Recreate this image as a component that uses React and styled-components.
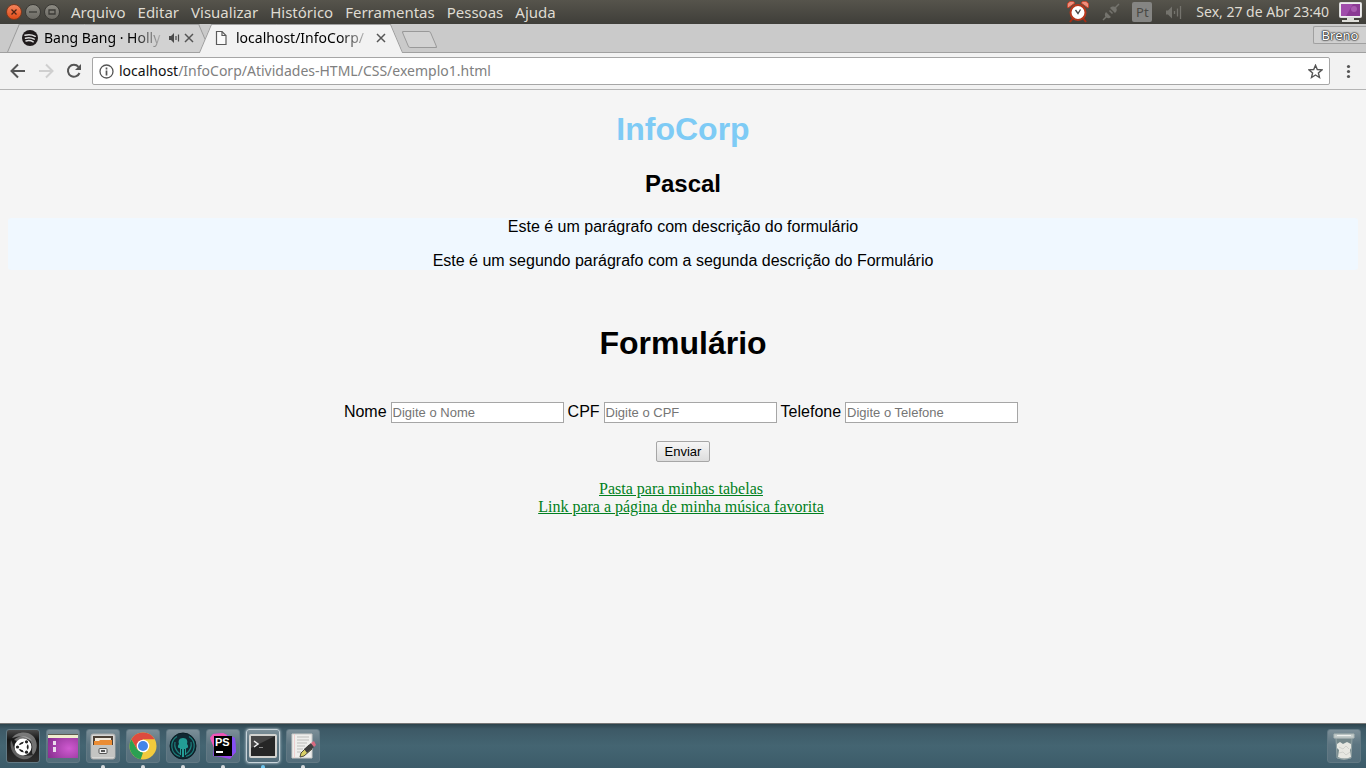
import React from "react";
import styled, { createGlobalStyle, css } from "styled-components";

const ui = '"Noto Sans", "Open Sans", sans-serif';
const page = '"Liberation Sans", Arial, sans-serif';
const pageSerif = '"Liberation Serif", "Times New Roman", serif';

const GlobalStyle = createGlobalStyle`
  * { box-sizing: border-box; }
  body { margin: 0; background: #f5f5f5; }
  svg { display: block; flex: none; }
`;

const Desktop = styled.div`
  display: flex;
  flex-direction: column;
  min-height: 100vh;
`;

/* System bar */
const SystemBar = styled.header`
  display: flex;
  align-items: center;
  height: 24px;
  padding: 0 4px 0 6px;
  background: linear-gradient(#56544c, #3f3e39);
  color: #dfdbd2;
  font: 14px/24px ${ui};
  white-space: nowrap;
`;
const WindowButtons = styled.div`
  display: flex;
  gap: 3px;
  margin-right: 11px;
`;
const WindowButton = styled.button`
  display: grid;
  place-items: center;
  width: 16px;
  height: 16px;
  padding: 0;
  border: 1px solid ${(p) => (p.$close ? "#7c3a1f" : "#3a3935")};
  border-radius: 50%;
  background: ${(p) =>
    p.$close
      ? "linear-gradient(#f4845c, #df4b17)"
      : "linear-gradient(#8d8b83, #6b6963)"};
`;
const Menu = styled.nav`
  display: flex;
  flex: 1;
  gap: 12px;
  font-size: 15px;
  line-height: 22px;
`;
const MenuItem = styled.button`
  padding: 0;
  border: 0;
  background: none;
  color: inherit;
  font: inherit;
`;
const Indicators = styled.div`
  display: flex;
  align-items: center;
`;
const Indicator = styled.span`
  margin-right: ${(p) => p.$gap}px;
`;
const Keyboard = styled(Indicator)`
  width: 20px;
  height: 20px;
  border-radius: 2px;
  background: #858583;
  color: #4a4945;
  font-size: 13px;
  line-height: 20px;
  text-align: center;
`;

/* Tab strip */
const TabStrip = styled.div`
  display: flex;
  height: 29px;
  padding-left: 13px;
  border-bottom: 1px solid #a0a0a0;
  background: #cacaca;
`;
const Tab = styled.div`
  position: relative;
  z-index: ${(p) => (p.$active ? 2 : 1)};
  display: flex;
  align-items: center;
  width: 192px;
  height: ${(p) => (p.$active ? 29 : 28)}px;
  padding: 0 11px ${(p) => (p.$active ? 1 : 0)}px 9px;
  color: #000;
  font: 14px/28px ${ui};
  &::before,
  &::after {
    content: "";
    position: absolute;
    z-index: -1;
    top: 0;
    bottom: 0;
    border-top: 1px solid #a0a0a0;
    background: ${(p) => (p.$active ? "#f2f2f2" : "#d2d2d2")};
  }
  &::before {
    left: 0;
    right: 40%;
    border-left: 1px solid #999;
    transform: skewX(-23deg);
  }
  &::after {
    left: 40%;
    right: 0;
    border-right: 1px solid #999;
    transform: skewX(23deg);
  }
`;
const TabTitle = styled.span`
  flex: 1;
  margin: 0 4px 0 6px;
  white-space: nowrap;
  mask-image: linear-gradient(to right, #000 calc(100% - 32px), transparent);
`;
const IconButton = styled.button`
  display: grid;
  place-items: center;
  padding: 0;
  border: 0;
  background: none;
`;
const TabAudio = styled.span`
  margin-right: 4px;
`;
const NewTab = styled.button`
  width: 29px;
  height: 17px;
  margin: 7px 0 0 8px;
  border: 1px solid #999;
  border-radius: 2px;
  background: #d2d2d2;
  transform: skewX(23deg);
`;
const Profile = styled.button`
  width: 53px;
  height: 18px;
  margin: 2px 0 0 auto;
  padding: 0;
  border: 1px solid #a0a0a0;
  border-right: 0;
  border-radius: 2px 0 0 2px;
  background: #d0d0d0;
  color: #fff;
  font: 13px/16px ${ui};
  text-shadow: 0 0 1px #222, 0 0 1px #222, 0 0 2px #222, 0 0 2px #444;
`;

/* Toolbar */
const Toolbar = styled.div`
  display: flex;
  align-items: center;
  height: 37px;
  padding: 0 9px 0 10px;
  border-bottom: 1px solid #b4b4b4;
  background: #f2f2f2;
`;
const Navigation = styled.div`
  display: flex;
  gap: 12px;
  margin-right: 10px;
`;
const AddressBox = styled.div`
  display: flex;
  flex: 1;
  align-items: center;
  height: 28px;
  margin-right: 9px;
  padding: 0 6px;
  border: 1px solid #a6a6a6;
  border-radius: 2px;
  background: #fff;
`;
const Address = styled.a`
  flex: 1;
  margin-left: 5px;
  color: #808080;
  font: 14px/26px ${ui};
  text-decoration: none;
`;
const Host = styled.span`
  color: #111;
`;

/* Document */
const Document = styled.main`
  flex: 1;
  padding: 21px 8px;
  background: #f5f5f5;
  color: #000;
  font: 16px/18px ${page};
  text-align: center;
`;
const Title = styled.h1`
  margin: 0 0 22px;
  color: ${(p) => p.$color || "#000"};
  font-size: 32px;
  line-height: 37px;
`;
const Subtitle = styled.h2`
  margin: 0 0 20px;
  font-size: 24px;
  line-height: 28px;
`;
const Description = styled.section`
  margin-bottom: 55px;
  border-radius: 3px;
  background: #f0f8ff;
`;
const Paragraph = styled.p`
  margin: 0;
  & + & {
    margin-top: 16px;
  }
`;
const Form = styled.form`
  display: flex;
  flex-direction: column;
  align-items: center;
  gap: 18px;
  margin: 40px 0 18px;
`;
const Fields = styled.div`
  display: flex;
  flex-wrap: wrap;
  justify-content: center;
  gap: 4px;
  padding-right: 4px;
`;
const Field = styled.label`
  display: flex;
  gap: 4px;
  line-height: 20px;
`;
const TextInput = styled.input`
  width: 173px;
  height: 21px;
  padding: 1px;
  border: 1px solid #a6a6a6;
  background: #fff;
  font: 13px/17px ${page};
  &::placeholder {
    color: #757575;
    opacity: 1;
  }
`;
const Submit = styled.button`
  width: 54px;
  height: 21px;
  padding: 0;
  border: 1px solid #a6a6a6;
  border-radius: 2px;
  background: linear-gradient(#f6f6f6, #dddddd);
  color: #000;
  font: 13px/18px ${page};
`;
const Links = styled.nav`
  display: flex;
  flex-direction: column;
  align-items: center;
  padding-right: 4px;
  font-family: ${pageSerif};
`;
const PageLink = styled.a`
  color: #008020;
`;

/* Dock */
const Dock = styled.footer`
  display: flex;
  gap: 6px;
  height: 45px;
  padding: 5px 5px 0 6px;
  border-top: 1px solid #777;
  background: linear-gradient(#2c434c, #3d5966 5px, #446572 22px, #3c5b69);
`;
const DockItem = styled.button`
  position: relative;
  display: grid;
  place-items: center;
  width: 34px;
  height: 34px;
  padding: 0;
  border: 1px solid ${(p) => (p.$focused ? "#c8d4da" : "#627984")};
  border-radius: 3px;
  background: ${(p) =>
    p.$dark
      ? "linear-gradient(#4a4a4a, #161616 30%, #2e2e2e)"
      : "linear-gradient(#7c8f98, #5d7581 45%, #546e7b)"};
  ${(p) => p.$focused && css`box-shadow: 0 0 3px #d7e3e8;`}
  ${(p) => p.$last && css`margin-left: auto;`}
  &::after {
    content: "";
    position: absolute;
    bottom: -6px;
    left: 14px;
    display: ${(p) => (p.$running ? "block" : "none")};
    width: 4px;
    height: 3px;
    border-radius: 2px 2px 0 0;
    background: ${(p) => (p.$focused ? "#6dc5ee" : "#d5d9db")};
  }
`;

const Svg = ({ w = 16, h = w, children }) => (
  <svg width={w} height={h} viewBox={`0 0 ${w} ${h}`} fill="none" aria-hidden="true">
    {children}
  </svg>
);

const AlarmIcon = () => (
  <Svg w={22}>
    <path d="M6 17 3 21M16 17l3 4" stroke="#a52c14" strokeWidth="2" />
    <path d="M1 7a4 4 0 0 1 7-5zM21 7a4 4 0 0 0-7-5z" fill="#ef8f7d" stroke="#c43e25" />
    <circle cx="11" cy="11.500" r="7.500" fill="#fff" stroke="#b7371c" strokeWidth="2" />
    <path d="m8.500 9 2.500 3.500 2.500-4" stroke="#444" strokeWidth="1.300" />
  </Svg>
);
const PlugIcon = () => (
  <Svg w={18}>
    <path d="m1 17 4-4M13 5l4-4M7.500 7.500 10.500 10.500" stroke="#74736d" strokeWidth="1.500" />
    <path d="M4 9 9 14c-2 1.800-4 1.300-5.200 0S2.300 11 4 9zM8 5l5 5c2-1.500 2.300-3.800 1-5.200S10 3 8 5z" fill="#74736d" />
  </Svg>
);
const VolumeIcon = () => (
  <Svg w={17}>
    <path d="M1 6.500h2l4-4v12l-4-4H1z" fill="#74736d" />
    <path d="M9.500 7v3M12.500 4.500v8M15.500 2v13" stroke="#74736d" strokeWidth="1.300" />
  </Svg>
);
const MonitorIcon = () => (
  <Svg w={23} h={22}>
    <path d="M8 16h7v3h5v2H3v-2h5z" fill="#deded9" />
    <rect x=".500" y="1.500" width="22" height="15" rx="1" fill="#eee" stroke="#ddd" />
    <rect x="2" y="3" width="19" height="12" fill="#8b3a94" />
    <path d="m2 3h12L7 15H2z" fill="#a04dab" />
    <circle cx="15" cy="8" r="3" fill="#c67ccc" opacity=".5" />
  </Svg>
);
const SpotifyIcon = () => (
  <Svg w={16}>
    <circle cx="8" cy="8" r="8" fill="#1f1a1b" />
    <path d="M3 5.300c3.500-1 7-.7 10.200 1M3.500 8.200c3-.8 6-.5 8.700 1M4 10.900c2.500-.6 5-.4 7.200.9" stroke="#ddd" strokeWidth="1.500" strokeLinecap="round" />
  </Svg>
);
const FileIcon = () => (
  <Svg w={16}>
    <path d="M2.500 1.500h5.500l4 4v9H2.500z" fill="#fafafa" stroke="#5a5a5a" strokeWidth="1.200" />
    <path d="M8 1.500v4h4" stroke="#5a5a5a" strokeWidth="1.200" />
  </Svg>
);
const SoundIcon = () => (
  <Svg w={11} h={10}>
    <path d="M0 3h2l3-3v10L2 7H0z" fill="#4b4b4b" />
    <path d="M7 3v4M9.500 1.500v7" stroke="#4b4b4b" strokeWidth="1.200" />
  </Svg>
);
const CloseIcon = () => (
  <Svg w={10}>
    <path d="m1 1 8 8M9 1 1 9" stroke="#555" strokeWidth="1.500" />
  </Svg>
);
const ArrowIcon = ({ forward }) => (
  <Svg w={16}>
    {forward ? (
      <path d="M1 8h13M8 1.500 14.500 8 8 14.500" stroke="#cfcfcf" strokeWidth="2" />
    ) : (
      <path d="M15 8H2M8 1.500 1.500 8 8 14.500" stroke="#555" strokeWidth="2" />
    )}
  </Svg>
);
const ReloadIcon = () => (
  <Svg w={16}>
    <path d="M13.500 10A6 6 0 1 1 12.500 3.800" stroke="#555" strokeWidth="2" />
    <path d="M15 1v6H9z" fill="#555" />
  </Svg>
);
const InfoIcon = () => (
  <Svg w={15}>
    <circle cx="7.500" cy="7.500" r="6.500" stroke="#555" strokeWidth="1.300" />
    <path d="M7.500 6.500v5M7.500 3.500v2" stroke="#555" strokeWidth="1.700" />
  </Svg>
);
const StarIcon = () => (
  <Svg w={15}>
    <path d="m7.500 1.300 1.800 4.200 4.700.4-3.600 3 1.100 4.600-4-2.500-4 2.500 1.100-4.600-3.600-3 4.700-.4z" stroke="#555" strokeWidth="1.400" />
  </Svg>
);
const MoreIcon = () => (
  <Svg w={18}>
    <g fill="#555">
      <circle cx="9.500" cy="4.500" r="1.600" />
      <circle cx="9.500" cy="9.500" r="1.600" />
      <circle cx="9.500" cy="14.500" r="1.600" />
    </g>
  </Svg>
);

const UbuntuIcon = () => (
  <Svg w={32}>
    <path d="M5 8C9 2 20 0 26 6c5 5 5 14 0 19-2-3 0-7-1-10C24 8 15 4 5 8z" fill="#999" opacity=".7" />
    <path d="M4 10c-2 9 3 17 11 19 5 1 9-1 11-4-8 2-15 0-18-5-2-3-2-7-4-10z" fill="#8a8a8a" opacity=".6" />
    <path d="M7 10c5-5 14-5 18 1-5-3-11-3-15 0z" fill="#ccc" opacity=".5" />
    <circle cx="16" cy="17" r="8.500" fill="#fff" />
    <circle cx="16.500" cy="17" r="4.200" stroke="#222" strokeWidth="2" />
    <path d="m16.500 17-7 0M16.500 17l3.500-6M16.500 17l3.500 6" stroke="#fff" strokeWidth="4.500" />
    <circle cx="10.500" cy="17" r="1.600" fill="#222" />
    <circle cx="19.500" cy="11.800" r="1.600" fill="#222" />
    <circle cx="19.500" cy="22.200" r="1.600" fill="#222" />
  </Svg>
);
const WorkspaceIcon = () => (
  <Svg w={30} h={26}>
    <defs>
      <radialGradient id="purple" cx=".7" cy=".6" r=".8">
        <stop stopColor="#cf5ad0" />
        <stop offset="1" stopColor="#862e8e" />
      </radialGradient>
    </defs>
    <path d="M0 1h30v24H0z" fill="url(#purple)" />
    <path d="M0 1h30v4H0z" fill="#f0edcf" />
    <path d="M0 1h30v1H0z" fill="#5e5b50" />
    <path d="M5 8h3v4H5zM5 14h3v5H5z" fill="#eadcec" />
  </Svg>
);
const FilesIcon = () => (
  <Svg w={26} h={28}>
    <rect x="1" y="2" width="24" height="25" rx="2" fill="#d7d7d5" stroke="#aaa" />
    <path d="M3 4h20v9H3z" fill="#4c4035" />
    <path d="M5 6h16v3H5z" fill="#f1e9dc" />
    <path d="M4 9h5l1-1h12v5H4z" fill="#ea8c35" />
    <path d="M2 13h22v12H2z" fill="#c4c4c2" />
    <rect x="9" y="16.500" width="8" height="5" rx="1" fill="#eee" stroke="#555" />
    <path d="M11 19h4" stroke="#555" strokeWidth="2" />
  </Svg>
);
const ChromeIcon = () => (
  <Svg w={28}>
    <circle cx="14" cy="14" r="13.500" fill="#f2ca3d" />
    <path d="M14 7.300h11.700A13.500 13.500 0 0 0 2.300 7.300L8.200 17.300z" fill="#dd4b3e" />
    <path d="M2.300 7.300 8.200 17.400 14 20.700l-2.300 6.600A13.500 13.500 0 0 1 2.300 7.300z" fill="#2ba052" />
    <circle cx="14" cy="14" r="6.300" fill="#fff" />
    <circle cx="14" cy="14" r="5" fill="#4285e8" />
  </Svg>
);
const KrakenIcon = () => (
  <Svg w={28}>
    <circle cx="14" cy="14" r="13" fill="#102832" stroke="#091c23" />
    <path d="M8 4.500a11 11 0 0 0 3 20M20 4.500a11 11 0 0 1-3 20M6 10c-1 5 1 9 5 12M22 10c1 5-1 9-5 12" stroke="#1c7f7c" strokeWidth="1.200" />
    <path d="M14 6c4 0 5 3 4 6 2 2 1 5-1 4v7h-1v-6h-1v8h-2v-8h-1v6h-1v-7c-2 1-3-2-1-4-1-3 0-6 4-6z" fill="#239d96" />
  </Svg>
);
const PhpStormIcon = () => (
  <Svg w={30} h={28}>
    <path d="m2 6 3-4 10-1 4 2 8 3 1 14-6 7-9-2-8-1 1-9z" fill="#9a48ee" />
    <path d="m2 6 3-4 10-1 4 2-4 8-9 5z" fill="#f057b4" />
    <path d="m19 3 8 3 1 14-5 3z" fill="#8450f4" />
    <path d="M6 4h18v20H6z" fill="#000" />
    <text x="7" y="14" fill="#fff" fontFamily="Liberation Sans, sans-serif" fontSize="11" fontWeight="700">PS</text>
    <path d="M8 19h7v2H8z" fill="#fff" />
  </Svg>
);
const TerminalIcon = () => (
  <Svg w={28} h={24}>
    <rect x="1" y="1" width="26" height="22" rx="1" fill="#262626" stroke="#d2d2cf" strokeWidth="2" />
    <path d="M2 2h24L2 14z" fill="#777" opacity=".4" />
    <path d="m5 7 4 3-4 3" stroke="#eee" strokeWidth="1.500" />
    <path d="M10 13.500h4" stroke="#888" />
  </Svg>
);
const EditorIcon = () => (
  <Svg w={26}>
    <path d="M2 1h20v24H2z" fill="#eeeeec" stroke="#cacac8" />
    <path d="M7 4h12M7 7h12M7 10h10M7 13h8M7 16h6M7 19h4" stroke="#bdbdbb" />
    <path d="M4.500 1v24" stroke="#efd0d0" />
    <path d="m11 20 8-8 3 4-8 7-4 1z" fill="#d8cf65" stroke="#4c4a3a" />
    <path d="m14 16 7-6 3 4-7 6z" fill="#3f3f3f" />
    <path d="m21 10 3-2 2 4-2 2z" fill="#d96a80" />
  </Svg>
);
const TrashIcon = () => (
  <Svg w={24} h={28}>
    <path d="m4 6 1 20q7 3 14 0l1-20z" fill="#74878a" stroke="#94a4a6" />
    <path d="m5 12 3-2 3 2 4-2 4 2v4l-1 2 1 7q-7 3-13 0l1-7-2-2z" fill="#e7e7e1" />
    <path d="m7 15 4 2 3-3 3 3M7 21l4-1 3 3 4-3" stroke="#d0d1cc" />
    <path d="M2 2h20v4H2z" fill="#c5cecd" stroke="#aeb8b7" />
    <path d="M5 3.500h14" stroke="#eef0ee" />
  </Svg>
);

const menuItems = ["Arquivo", "Editar", "Visualizar", "Histórico", "Ferramentas", "Pessoas", "Ajuda"];

const fields = [
  { id: "nome", label: "Nome" },
  { id: "cpf", label: "CPF" },
  { id: "telefone", label: "Telefone" },
];

const dockItems = [
  { name: "Início", icon: <UbuntuIcon />, $dark: true },
  { name: "Espaços de trabalho", icon: <WorkspaceIcon /> },
  { name: "Arquivos", icon: <FilesIcon />, $running: true },
  { name: "Chrome", icon: <ChromeIcon />, $running: true },
  { name: "GitKraken", icon: <KrakenIcon />, $running: true },
  { name: "PhpStorm", icon: <PhpStormIcon />, $running: true },
  { name: "Terminal", icon: <TerminalIcon />, $running: true, $focused: true },
  { name: "Editor de texto", icon: <EditorIcon />, $running: true },
  { name: "Lixeira", icon: <TrashIcon />, $last: true },
];

export default function App() {
  return (
    <Desktop>
      <GlobalStyle />
      <SystemBar>
        <WindowButtons>
          <WindowButton $close aria-label="Fechar">
            <Svg w={8}><path d="m1.500 1.500 5 5M6.500 1.500l-5 5" stroke="#4a2314" strokeWidth="1.300" /></Svg>
          </WindowButton>
          <WindowButton aria-label="Minimizar">
            <Svg w={8}><path d="M0 4h8" stroke="#3c3b37" strokeWidth="1.300" /></Svg>
          </WindowButton>
          <WindowButton aria-label="Maximizar">
            <Svg w={8}><path d="M1 2h6v4H1z" stroke="#3c3b37" strokeWidth="1.300" /></Svg>
          </WindowButton>
        </WindowButtons>
        <Menu>
          {menuItems.map((item) => (
            <MenuItem key={item}>{item}</MenuItem>
          ))}
        </Menu>
        <Indicators>
          <Indicator $gap={13}><AlarmIcon /></Indicator>
          <Indicator $gap={12}><PlugIcon /></Indicator>
          <Keyboard $gap={13}>Pt</Keyboard>
          <Indicator $gap={14}><VolumeIcon /></Indicator>
          <Indicator $gap={10}>Sex, 27 de Abr 23:40</Indicator>
          <MonitorIcon />
        </Indicators>
      </SystemBar>

      <TabStrip>
        <Tab>
          <SpotifyIcon />
          <TabTitle>Bang Bang · Holly</TabTitle>
          <TabAudio><SoundIcon /></TabAudio>
          <IconButton aria-label="Fechar guia"><CloseIcon /></IconButton>
        </Tab>
        <Tab $active>
          <FileIcon />
          <TabTitle>localhost/InfoCorp/</TabTitle>
          <IconButton aria-label="Fechar guia"><CloseIcon /></IconButton>
        </Tab>
        <NewTab aria-label="Nova guia" />
        <Profile>Breno</Profile>
      </TabStrip>

      <Toolbar>
        <Navigation>
          <IconButton aria-label="Voltar"><ArrowIcon /></IconButton>
          <IconButton aria-label="Avançar"><ArrowIcon forward /></IconButton>
          <IconButton aria-label="Recarregar"><ReloadIcon /></IconButton>
        </Navigation>
        <AddressBox>
          <InfoIcon />
          <Address href="#">
            <Host>localhost</Host>/InfoCorp/Atividades-HTML/CSS/exemplo1.html
          </Address>
          <IconButton aria-label="Favoritar"><StarIcon /></IconButton>
        </AddressBox>
        <IconButton aria-label="Mais opções"><MoreIcon /></IconButton>
      </Toolbar>

      <Document>
        <Title $color="#7ecbf5">InfoCorp</Title>
        <Subtitle>Pascal</Subtitle>
        <Description>
          <Paragraph>Este é um parágrafo com descrição do formulário</Paragraph>
          <Paragraph>Este é um segundo parágrafo com a segunda descrição do Formulário</Paragraph>
        </Description>
        <Title>Formulário</Title>
        <Form onSubmit={(e) => e.preventDefault()}>
          <Fields>
            {fields.map(({ id, label }) => (
              <Field key={id} htmlFor={id}>
                {label}
                <TextInput id={id} placeholder={`Digite o ${label}`} />
              </Field>
            ))}
          </Fields>
          <Submit type="submit">Enviar</Submit>
        </Form>
        <Links>
          <PageLink href="#">Pasta para minhas tabelas</PageLink>
          <PageLink href="#">Link para a página de minha música favorita</PageLink>
        </Links>
      </Document>

      <Dock>
        {dockItems.map(({ name, icon, ...state }) => (
          <DockItem key={name} aria-label={name} {...state}>{icon}</DockItem>
        ))}
      </Dock>
    </Desktop>
  );
}
